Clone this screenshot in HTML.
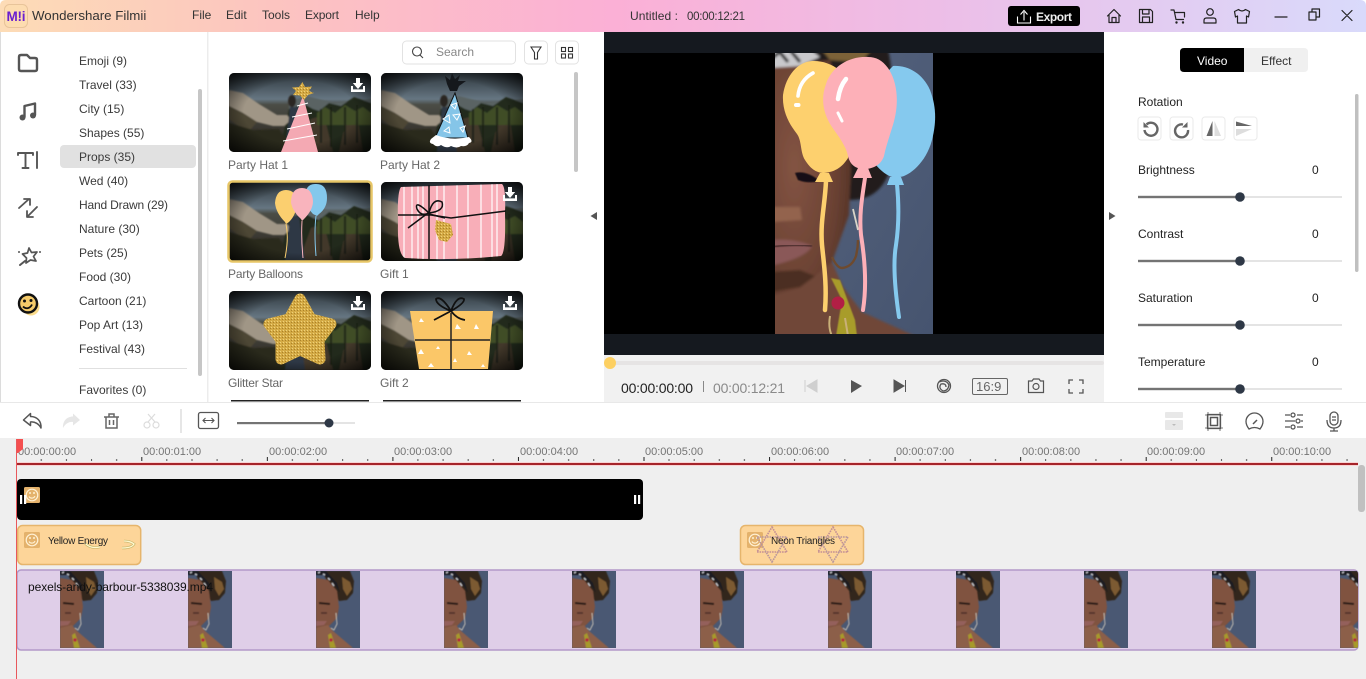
<!DOCTYPE html>
<html lang="en"><head><meta charset="utf-8"><title>Wondershare Filmii</title>
<style>
html,body{margin:0;padding:0;background:#fff;width:1366px;height:679px;overflow:hidden}
svg{display:block}
text{font-family:"Liberation Sans","Noto Sans CJK SC",sans-serif;font-size:12px;fill:#333}
.cat text{fill:#3a3a3a}
.lbl text{fill:#666}
.rul text{font-size:11px;fill:#747474}
.tb{fill:none;stroke:#222;stroke-width:1.2;stroke-linecap:round;stroke-linejoin:round}
</style></head><body>
<svg width="1366" height="679" viewBox="0 0 1366 679" xmlns="http://www.w3.org/2000/svg">
<defs>
<filter id="b1" x="-5%" y="-5%" width="110%" height="110%"><feGaussianBlur stdDeviation="1.3"/></filter>
<filter id="b2" x="-5%" y="-5%" width="110%" height="110%"><feGaussianBlur stdDeviation=".8"/></filter>
<filter id="b3" x="-5%" y="-5%" width="110%" height="110%"><feGaussianBlur stdDeviation=".45"/></filter>
<linearGradient id="title" x1="0" x2="1" y1="0" y2="0"><stop offset="0" stop-color="#fddcb6"/><stop offset=".2" stop-color="#fcc4c0"/><stop offset=".45" stop-color="#fbb0d6"/><stop offset=".7" stop-color="#ecbfe8"/><stop offset="1" stop-color="#d9dafb"/></linearGradient>
<linearGradient id="sky" x1="0" x2="0" y1="0" y2="1"><stop offset="0" stop-color="#2d363c"/><stop offset=".33" stop-color="#667682"/><stop offset=".4" stop-color="#4b4d46"/><stop offset="1" stop-color="#29221c"/></linearGradient>
<radialGradient id="vig" cx=".5" cy=".5" r=".72"><stop offset=".55" stop-color="#000" stop-opacity="0"/><stop offset="1" stop-color="#000" stop-opacity=".9"/></radialGradient>
<linearGradient id="vidbg" x1="0" x2="1" y1="0" y2="1"><stop offset="0" stop-color="#56647f"/><stop offset="1" stop-color="#46546f"/></linearGradient>
<radialGradient id="skin" cx=".3" cy=".45" r=".85"><stop offset="0" stop-color="#835443"/><stop offset=".6" stop-color="#6b4233"/><stop offset="1" stop-color="#4a2c22"/></radialGradient>
<pattern id="gold" width="3" height="3" patternUnits="userSpaceOnUse"><rect width="3" height="3" fill="#d4aa45"/><rect x="0" y="0" width="1" height="1" fill="#efd27a"/><rect x="2" y="1" width="1" height="1" fill="#ab8228"/></pattern>
<pattern id="ticks" x="15.75" y="456" width="125.55" height="6" patternUnits="userSpaceOnUse"><rect x="0" y="1" width="1" height="4" fill="#222"/><rect x="25" y="3" width="1" height="2" fill="#555"/><rect x="50.2" y="3" width="1" height="2" fill="#555"/><rect x="75.3" y="3" width="1" height="2" fill="#555"/><rect x="100.4" y="3" width="1" height="2" fill="#555"/></pattern>
<clipPath id="tclip"><rect width="142" height="79" rx="5"/></clipPath>
<clipPath id="listclip"><rect x="208" y="32" width="396" height="370"/></clipPath>
<clipPath id="vclip"><rect x="775" y="53" width="158" height="281"/></clipPath>
<clipPath id="fclip"><rect width="44" height="77"/></clipPath>
<clipPath id="trk"><rect x="17" y="570" width="1341" height="80" rx="4"/></clipPath>
<clipPath id="g1clip"><path d="M3 3 104 0Q108 3 107 29 108 69 103 72 53 77 7 74 -1 70 0 38-1 8 3 3Z"/></clipPath>

<g id="scene"><g clip-path="url(#tclip)">
<rect width="142" height="79" fill="url(#sky)"/>
<g filter="url(#b2)">
<path d="M60 28 78 23 105 30 142 26V45H60Z" fill="#5a6464"/>
<path d="M50 79 60 36 75 31 84 36 90 38 100 30 112 33 125 24 142 30V79Z" fill="#232b1b"/>
<path d="M70 79 82 46 95 42 104 79ZM110 79 118 44 128 42 134 79Z" fill="#43372a"/>
<path d="M88 40l8-6 10 6 10-8 10 6 8-4 8 6v12H88Z" fill="#3f4e25"/>
<path d="M92 36V70M102 34V74M116 34V72M128 32V70" stroke="#1b2213" stroke-width="2"/>
<path d="M0 17 14 20 30 31 48 42 58 42 62 47 55 53 44 53 28 49 14 40 0 33Z" fill="#a09686"/>
<path d="M0 33 14 40 28 49 20 58 8 52 0 46Z" fill="#4d4635"/>
<path d="M0 50 24 57 50 56 60 70 50 79H0Z" fill="#2c2b1e"/>
<ellipse cx="63" cy="28" rx="4" ry="6" fill="#2a2522"/>
<path d="M61 34 70 34 76 79H56Z" fill="#2d3744"/>
</g>
<rect width="142" height="79" fill="url(#vig)"/>
</g></g>

<g id="dl" fill="#fff"><path d="M-2-7h4v5h3.200L0 4-5.200-2H-2Z"/><path d="M-7 1h2v3.400H5V1h2v6H-7Z"/></g>

<g id="face"><g clip-path="url(#fclip)">
<rect width="44" height="77" fill="#4a5873"/>
<g filter="url(#b3)">
<path d="M6 0H34L38 10 37 22 31 29 23 30 15 18Z" fill="#33271d"/>
<path d="M26 6 34 11 36 18 31 25 27 18Z" fill="#7c5a30"/>
<path d="M0 7 12 9 21 20 23 36 21 47 13 55 0 58Z" fill="#80523f"/>
<path d="M0 57 12 54 17 60 37 77H0Z" fill="#8c5e49"/>
<path d="M0 0H10L21 12 24 22 17 11 8 4 0 4Z" fill="#1d1b20"/>
<path d="M2 2 4 1M7 3 9 4M12 7 14 9M16 12 18 15" stroke="#c9cbd0" stroke-width="1.300"/>
<path d="M3 32 14 33" stroke="#2a1c18" stroke-width="2"/>
<path d="M5 42 11 42" stroke="#4d2f27" stroke-width="1.500"/>
<path d="M0 50 11 50 8 54 0 55Z" fill="#94605c"/>
<path d="M20 42 21 53 18 59 15 57" fill="none" stroke="#c7c0b4" stroke-width=".9"/>
<path d="M15 62 20 77H14L12 64Z" fill="#a79a2a"/><circle cx="15" cy="69" r="1.700" fill="#b42040"/>
</g></g></g>

<g id="smile"><rect x="0" y="0" width="16" height="16" rx="1.500" fill="#e4b26c"/><circle cx="8" cy="8" r="5.800" fill="none" stroke="#fff1d4" stroke-width="1.200"/><path d="M5 9.500c1 2 4.500 2.400 6-.4" fill="none" stroke="#fff1d4" stroke-width="1.200"/><circle cx="6" cy="6" r="1" fill="#fff1d4"/><circle cx="10" cy="6" r="1" fill="#fff1d4"/></g>

<g id="hex" fill="none" stroke="#c38f95" stroke-width="1.600" stroke-dasharray="1.600 .9"><path d="M15 0 30 25H0Z"/><path d="M15 35 30 10H0Z" stroke="#b8969c"/></g>

<g id="slider"><rect x="0" y="-1.200" width="102" height="2.400" fill="#747474"/><rect x="102" y="-1" width="102" height="2" fill="#e4e4e4"/><circle cx="102" cy="0" r="4.800" fill="#2e3846"/></g>
<g id="sq"><rect x="0" y="0" width="23" height="23" rx="3" fill="#fff" stroke="#eaeaea"/></g>
</defs>

<!-- base -->
<rect width="1366" height="679" fill="#fff"/>
<rect x="0" y="32" width="1" height="370" fill="#dcdcdc"/>
<rect x="207" y="32" width="1.500" height="370" fill="#ececec"/>
<path d="M6 0H1360Q1366 0 1366 6V32H0V6Q0 0 6 0Z" fill="url(#title)"/>

<!-- title bar -->
<rect x="4.500" y="4.500" width="23" height="23" rx="5" fill="#fddcb0" stroke="#e8c49a"/>
<text x="6.500" y="21" style="font-size:13.500px;font-weight:bold;fill:#6a1fd0" textLength="19">M!i</text>
<text x="32" y="20" style="font-size:13.300px;fill:#333">Wondershare Filmii</text>
<text x="192" y="19">File</text><text x="226" y="19">Edit</text><text x="262" y="19">Tools</text><text x="305" y="19" textLength="34">Export</text><text x="355" y="19">Help</text>
<text x="630" y="20" textLength="48">Untitled :</text><text x="687" y="20" textLength="58" style="font-size:11.500px">00:00:12:21</text>
<rect x="1008" y="6" width="72" height="20" rx="3" fill="#000"/>
<path d="M1024 20.500V12M1020.500 14.500 1024 10.500 1027.500 14.500M1017.500 16.500V23H1030.500V16.500" fill="none" stroke="#fff" stroke-width="1.100"/>
<text x="1036" y="21" style="font-weight:bold;fill:#eee" textLength="36">Export</text>
<g class="tb">
<path d="M1107.500 16 1114 9.500 1120.500 16M1109 15V22.500H1119V15M1112 22.500V17.500H1116V22.500"/>
<path d="M1139.500 9.500H1150.500L1152.500 11.500V22.500H1139.500ZM1142.500 9.500V14H1149V9.500M1142.500 22.500V17H1149.500V22.500"/>
<path d="M1171 10H1174L1176 19.500H1183.500M1175 12.500H1184.500V17"/><circle cx="1176.500" cy="22.500" r=".6"/><circle cx="1183" cy="22.500" r=".6"/>
<circle cx="1210" cy="12" r="3.300"/><path d="M1204 23V20.500Q1204 18 1206.500 18H1213.500Q1216 18 1216 20.500V23Z"/>
<path d="M1238.500 9.500 1234.500 11.500 1235.500 17 1237.500 16V23H1246.500V16L1248.500 17 1249.500 11.500 1245.500 9.500Q1242 12.500 1238.500 9.500Z"/>
<path d="M1275 17H1287M1309 12H1316V20H1309ZM1312 12V9H1319.500V17H1316M1342 10.500 1352 20.500M1352 10.500 1342 20.500"/>
</g>

<!-- left nav icons -->
<g fill="none" stroke="#555" stroke-width="2.400" stroke-linejoin="round" stroke-linecap="round">
<path d="M19 57Q19 55 21 55H27L30 58H35Q37 58 37 60V69Q37 71 35 71H21Q19 71 19 69Z"/>
<path d="M24.500 117V106L35 103.500V115"/>
<path d="M18 155V153H33V155M25.500 153V168M22.500 168H28.500" stroke-width="1.900"/><path d="M37 152V168" stroke-width="1.900"/>
<path d="M19 208 29 199M24 199H30V205M37 207 28 216M27 211V217H33" stroke-width="1.800"/>
<path d="M29 248 31.500 252.500 37 252 33.500 256.500 36 261 30.500 260 26 263 26.500 258 22.500 254 27.500 253Z" stroke-width="1.700"/><path d="M20 265 25 261" stroke-width="2"/>
</g>
<g fill="#555"><circle cx="22.500" cy="117.500" r="3"/><circle cx="33" cy="115.500" r="3"/><circle cx="19" cy="252" r="1"/><circle cx="40" cy="252" r="1"/></g>
<circle cx="31" cy="307" r="8.500" fill="#fbdc8c"/>
<circle cx="28" cy="303.500" r="9" fill="#f5cb6a" stroke="#111" stroke-width="2.400"/>
<circle cx="24.500" cy="301" r="1.500" fill="#111"/><circle cx="31" cy="300.500" r="1.500" fill="#111"/><path d="M23 306.500c3 3 7 2 9-2" fill="none" stroke="#111" stroke-width="1.800"/>

<!-- categories -->
<rect x="60" y="145" width="136" height="23" rx="4" fill="#e1e1e1"/>
<g class="cat">
<text x="79" y="65">Emoji (9)</text><text x="79" y="89">Travel (33)</text><text x="79" y="113">City (15)</text><text x="79" y="137">Shapes (55)</text><text x="79" y="161">Props (35)</text><text x="79" y="185">Wed (40)</text><text x="79" y="209" textLength="89">Hand Drawn (29)</text><text x="79" y="233">Nature (30)</text><text x="79" y="257">Pets (25)</text><text x="79" y="281">Food (30)</text><text x="79" y="305">Cartoon (21)</text><text x="79" y="329">Pop Art (13)</text><text x="79" y="353">Festival (43)</text><text x="79" y="394">Favorites (0)</text>
</g>
<rect x="79" y="368" width="108" height="1" fill="#e0e0e0"/>
<rect x="198" y="89" width="4" height="287" rx="2" fill="#c6c6c6"/>

<!-- search row -->
<rect x="402.500" y="41" width="113" height="23" rx="4" fill="#fff" stroke="#e2e2e2"/>
<circle cx="417" cy="51.500" r="4.500" fill="none" stroke="#444" stroke-width="1.100"/><path d="M420 55 423 58" stroke="#444" stroke-width="1.100"/>
<text x="436" y="56" style="fill:#888">Search</text>
<rect x="524.500" y="41" width="23" height="23" rx="4" fill="#fff" stroke="#e2e2e2"/>
<path d="M531 47H541L537.500 52.500V59H534.500V52.500Z" fill="none" stroke="#333" stroke-width="1.100"/>
<rect x="555.500" y="41" width="23" height="23" rx="4" fill="#fff" stroke="#e2e2e2"/>
<g fill="none" stroke="#333" stroke-width="1.100"><rect x="561.500" y="47.500" width="4" height="4"/><rect x="568.500" y="47.500" width="4" height="4"/><rect x="561.500" y="54" width="4" height="4"/><rect x="568.500" y="54" width="4" height="4"/></g>
<rect x="574" y="72" width="4" height="100" rx="2" fill="#c6c6c6"/>

<!-- thumbnails -->
<g clip-path="url(#listclip)">
<g transform="translate(229 73)"><use href="#scene"/>
<path d="M74 23 52 79 89 79Z" fill="#f4a9b3"/><path d="M68 33 79 30M63 44 83 40M58 56 86 50M54 68 88 62" stroke="#fff" stroke-width="1" fill="none"/>
<path d="M73.500 9 76 14 83 13.500 80 18 85 20 79 22 75 27 71 22.500 64 22 67 18 63 14.500 70 14Z" fill="url(#gold)"/><use href="#dl" x="129" y="12"/></g>
<g transform="translate(381 73)"><use href="#scene"/>
<path d="M74 20 54 65 87 65Z" fill="#85c5e8" stroke="#111" stroke-width="1"/>
<path d="M50 66Q47 70 52 71 56 75 60 72 66 76 70 73 76 76 80 73 86 74 88 70 93 69 88 64 70 68 55 62Z" fill="#fff"/>
<path d="M64 3 69 7 71 0 74 6 79 2 77 8 85 8 78 13 76 18 69 18 66 11Z" fill="#15181c"/>
<path d="M70 32 76 30 74 36ZM62 46 68 42 69 50ZM72 42 79 41 76 47ZM63 58 68 54 69 60ZM79 55 84 53 82 59Z" fill="none" stroke="#fff" stroke-width="1"/></g>
<g transform="translate(229 182)"><use href="#scene"/>
<path d="M86 2Q98 1 98 16 98 26 90 32L88 34 84 32Q78 26 76 16 76 2 86 2Z" fill="#84c8ec"/><path d="M87 34Q85 50 87 74" stroke="#84c8ec" fill="none"/>
<path d="M57 8Q47 8 46 21 47 31 56 40L57 42 60 40Q68 32 68 20 67 8 57 8Z" fill="#fbcf6f"/><path d="M57 42Q60 56 56 76" stroke="#fbcf6f" fill="none"/>
<path d="M73 6Q62 6 62 21 64 30 72 37L73 39 75 37Q84 28 84 19 83 6 73 6Z" fill="#f9b4bd"/><path d="M73 39Q72 56 74 76" stroke="#f9b4bd" fill="none"/>
<rect x="-.500" y="-.500" width="143" height="80" rx="4" fill="none" stroke="#e7c667" stroke-width="2.500"/></g>
<g transform="translate(381 182)"><use href="#scene"/>
<g transform="translate(17 2)"><g clip-path="url(#g1clip)"><rect x="-2" y="-2" width="114" height="80" fill="#f8aeb8"/>
<path d="M6 0V76M14 0V76M20 0V76M25 0V76M39 0V76M46 0V76M59 0V76M70 0V76M83 0V76M94 0V76M99 0V76" stroke="#fff" stroke-width="1.200" fill="none"/></g></g>
<path d="M48 3V77M17 33 50 33 70 36 125 29" stroke="#111" stroke-width="1.500" fill="none"/>
<path d="M48 31Q33 17 36 27 40 35 48 31Q64 29 61 20 52 15 48 31ZM47 31 27 46M48 32 64 36" stroke="#111" stroke-width="1.500" fill="none"/>
<path d="M55 38 70 42 72 53 66 60 58 58 54 48Z" fill="url(#gold)"/><use href="#dl" x="129" y="12"/></g>
<g transform="translate(229 291)"><use href="#scene"/>
<path d="M71 8 82 28 102 33 90 49 91 68 71 59 52 68 52 49 40 33 60 28Z" fill="url(#gold)" stroke="url(#gold)" stroke-width="11" stroke-linejoin="round"/><use href="#dl" x="129" y="12"/></g>
<g transform="translate(381 291)"><use href="#scene"/>
<path d="M29 20H112L107 78H38Z" fill="#fbc768"/>
<path d="M34 49H109M70 22V78" stroke="#222" stroke-width="1.500" fill="none"/>
<path d="M70 20Q55 14 55 8 60 4 70 20Q84 12 83 8 76 4 70 20ZM70 20 53 29M70 20Q76 28 84 29" stroke="#111" stroke-width="1.800" fill="none"/>
<path d="M40 27l3 4h-5ZM76 33l4 5h-6ZM95 33l3 5h-5ZM40 58l3 5h-6ZM57 55l2 3h-4ZM88 60l3 4h-5ZM50 72l3 4h-6ZM74 67l2 4h-4ZM102 73l2 3h-4Z" fill="#fff"/><use href="#dl" x="129" y="12"/></g>
<rect x="231" y="400" width="138" height="1.500" fill="#222"/><rect x="383" y="400" width="138" height="1.500" fill="#222"/>
</g>
<g class="lbl">
<text x="228" y="169">Party Hat 1</text><text x="380" y="169">Party Hat 2</text><text x="228" y="278" textLength="75">Party Balloons</text><text x="380" y="278">Gift 1</text><text x="228" y="387" textLength="55">Glitter Star</text><text x="380" y="387">Gift 2</text>
</g>

<!-- preview -->
<rect x="604" y="32" width="500" height="323" fill="#000"/>
<rect x="604" y="32" width="500" height="21" fill="#15191f"/><rect x="604" y="334" width="500" height="21" fill="#15191f"/>
<path d="M597 212V220L590.500 216Z" fill="#555"/><path d="M1109 212V220L1115.500 216Z" fill="#555"/>
<g clip-path="url(#vclip)">
<rect x="775" y="53" width="158" height="281" fill="url(#vidbg)"/>
<g filter="url(#b1)">
<path d="M770 48H888Q898 100 890 170 880 200 850 200L770 200Z" fill="#241e1b"/>
<path d="M822 50H872L860 62 830 60Z" fill="#7b6238"/>
<path d="M770 66 830 60 848 130 851 170 849 215 832 262 800 290 770 296Z" fill="url(#skin)"/>
<path d="M770 296 800 288 832 262 843 287 862 312 915 336H770Z" fill="#6f4637"/>
<path d="M770 48H808L820 57 800 66 770 68Z" fill="#c9c9cc"/>
<path d="M778 50 788 62M790 50 800 62M770 60 782 50" stroke="#111" stroke-width="3"/>
<path d="M770 207 800 207 802 220 770 222Z" fill="#93634d"/>
<path d="M770 240Q795 238 812 246 806 258 770 266Z" fill="#8a5858"/>
<path d="M770 292 800 287 815 276 800 270 770 272Z" fill="#4c2d23"/>
</g>
<path d="M795 173Q806 170 820 181 808 184 798 180Z" fill="#171012" filter="url(#b3)"/>
<path d="M770 247Q795 244 812 246" fill="none" stroke="#3d2322" stroke-width="1.300" filter="url(#b3)"/>
<path d="M832 257Q837 268 842 268 852 267 856 256 858 248 858 240" fill="none" stroke="#6e4a2e" stroke-width="2.400"/><path d="M853 209 858 230" stroke="#d8d4c8" stroke-width="1.800"/>
<path d="M831 278 840 280 855 320 857 336H836L842 300Z" fill="#a89c2c" filter="url(#b3)"/><circle cx="838" cy="303" r="6.500" fill="#b21f45"/><path d="M830 316Q828 328 832 336M845 318 848 336" stroke="#c9b078" stroke-width="2" fill="none"/>
</g>
<!-- balloons -->
<path d="M893 66C906 65 922 72 930 90 937 108 936 124 932 140 926 163 909 176 900 177L892 177C886 175 880 170 876 165L860 100Z" fill="#85c9ee"/>
<path d="M890 177H901L904 185H887Z" fill="#85c9ee"/><path d="M897 184C899 205 899 225 896 245 893 262 895 290 899 317" fill="none" stroke="#85c9ee" stroke-width="4" stroke-linecap="round"/>
<path d="M812 61C798 62 786 75 783 95 782 112 790 125 797 134 802 141 800 152 805 160 811 170 818 173 824 173 836 172 843 166 848 158L860 100C850 72 830 60 812 61Z" fill="#fdd06e"/>
<path d="M820 173H829L833 182H815Z" fill="#fdd06e"/><path d="M826 181C825 205 820 222 822 245 824 265 827 285 825 310" fill="none" stroke="#fdd06e" stroke-width="4.500" stroke-linecap="round"/>
<path d="M868 57C850 56 832 66 826 84 820 100 824 115 832 127 839 137 846 146 848 156 850 165 856 169 864 169 873 169 881 165 884 156 886 146 889 138 892 128 899 108 899 84 888 68 882 60 876 57 868 57Z" fill="#fdb0b8"/>
<path d="M858 168H868L872 178H853Z" fill="#fdb0b8"/><path d="M865 178C862 198 859 215 861 235 865 260 867 285 863 310" fill="none" stroke="#fdb0b8" stroke-width="4" stroke-linecap="round"/>
<g fill="none" stroke="#fff" stroke-linecap="round"><path d="M846 79C841 85 839 92 838 99" stroke-width="4.500"/><path d="M838 113 842 121" stroke-width="3"/><path d="M813 73C804 78 799 86 798 96" stroke-width="3.600"/><path d="M796 105H798.500" stroke-width="4"/></g>

<!-- seek & controls -->
<rect x="604" y="355" width="500" height="47" fill="#f1f1f1"/>
<rect x="604" y="361" width="500" height="4" rx="2" fill="#e6e4e4"/>
<circle cx="610" cy="363" r="6" fill="#fdd062"/>
<text x="621" y="393" style="font-size:14px;fill:#222" textLength="72">00:00:00:00</text>
<rect x="703" y="381" width="1" height="11" fill="#888"/>
<text x="713" y="393" style="font-size:14px;fill:#8a8a8a" textLength="72">00:00:12:21</text>
<path d="M817 380V392L807 386ZM805 380V392" fill="#cfcfcf" stroke="#cfcfcf"/>
<path d="M851 380 862 386 851 393Z" fill="#555"/>
<path d="M894 380 904 386 894 392ZM905.500 380V392" fill="#555" stroke="#555"/>
<g fill="none" stroke="#555" stroke-width="1.300"><circle cx="944" cy="386" r="6.500"/><path d="M939 382Q946 379 949 385 948 391 943 391 938 388 941 384 946 383 946 387"/></g>
<rect x="972.500" y="378.500" width="35" height="16" rx="1.500" fill="none" stroke="#666"/>
<text x="976" y="391" style="font-size:13px;fill:#666">16:9</text>
<g fill="none" stroke="#555" stroke-width="1.200"><path d="M1028.500 381H1032L1033.500 379H1039L1040.500 381H1043.500V392.500H1028.500Z"/><circle cx="1036" cy="386.500" r="3"/>
<path d="M1069 384V380H1073M1079 380H1083V384M1083 389V393H1079M1073 393H1069V389" stroke-width="1.300"/></g>

<!-- right panel -->
<path d="M1184 48H1244V72H1184Q1180 72 1180 68V52Q1180 48 1184 48Z" fill="#000"/>
<path d="M1244 48H1304Q1308 48 1308 52V68Q1308 72 1304 72H1244Z" fill="#f0f0f0"/>
<text x="1197" y="65" style="fill:#fff">Video</text><text x="1261" y="65" style="fill:#333">Effect</text>
<text x="1138" y="106" style="fill:#222">Rotation</text>
<use href="#sq" x="1138" y="117"/><use href="#sq" x="1170" y="117"/><use href="#sq" x="1202" y="117"/><use href="#sq" x="1234" y="117"/>
<g fill="none" stroke="#666" stroke-width="2.400"><path d="M1146.500 124.500A6.500 6.500 0 1 1 1144.500 130"/><path d="M1183 124.500A6.500 6.500 0 1 0 1188 130"/></g>
<path d="M1143.500 122V127.500H1149ZM1187.500 122V127.500H1182Z" fill="#666"/>
<path d="M1212.500 121V136H1206.500ZM1236 121.500 1252 126H1236Z" fill="#666"/>
<path d="M1214.500 121V136H1221ZM1236 129H1252L1236 136Z" fill="#ddd"/>
<text x="1138" y="174" style="fill:#222">Brightness</text><text x="1138" y="238" style="fill:#222">Contrast</text><text x="1138" y="302" style="fill:#222">Saturation</text><text x="1138" y="366" style="fill:#222">Temperature</text>
<text x="1312" y="174" style="fill:#222">0</text><text x="1312" y="238" style="fill:#222">0</text><text x="1312" y="302" style="fill:#222">0</text><text x="1312" y="366" style="fill:#222">0</text>
<use href="#slider" x="1138" y="197"/><use href="#slider" x="1138" y="261"/><use href="#slider" x="1138" y="325"/><use href="#slider" x="1138" y="389"/>
<rect x="1355" y="94" width="3.500" height="178" rx="1.700" fill="#c0c0c0"/>

<!-- toolbar -->
<rect x="0" y="402" width="1366" height="1.500" fill="#e8e8e8"/>
<rect x="0" y="403" width="1366" height="35" fill="#fff"/>
<path d="M30.500 413.500 23.500 420 30.500 425.500V422C35 421.500 39 424 41 428 41.500 421 37 416.500 30.500 416.500Z" fill="none" stroke="#555" stroke-width="1.500" stroke-linejoin="round"/>
<path d="M73 413.500 80 420 73 425.500V422C69 421.500 65 424 63 428 62.500 421 67 416.500 73 416.500Z" fill="#e6e6e6"/>
<g fill="none" stroke="#666" stroke-width="1.500"><path d="M104 417H119M109 417V414H114V417M106 417V428H117V417M109.500 420V425M113.500 420V425"/></g>
<g fill="none" stroke="#dcdcdc" stroke-width="1.200"><circle cx="147" cy="425" r="3"/><circle cx="156" cy="425" r="3"/><path d="M148 422 155 414M155 422 148 414"/></g>
<rect x="180.500" y="409" width="1" height="24" fill="#ccc"/>
<rect x="198.500" y="412.500" width="20" height="16" rx="2" fill="none" stroke="#555" stroke-width="1.300"/>
<path d="M203 420.500H214M205.500 418 203 420.500 205.500 423M211.500 418 214 420.500 211.500 423" fill="none" stroke="#555" stroke-width="1.100"/>
<rect x="237" y="422" width="92" height="2.200" fill="#747474"/><rect x="329" y="422" width="26" height="2" fill="#e4e4e4"/><circle cx="329" cy="423" r="4.500" fill="#2e3846"/>
<g fill="#e8e8e8"><rect x="1165" y="412" width="18" height="6" rx="1"/><rect x="1165" y="420" width="18" height="10" rx="1"/></g><path d="M1172 424H1176L1174 426Z" fill="#bbb"/>
<g fill="none" stroke="#555" stroke-width="1.300"><rect x="1207.500" y="414.500" width="13" height="14"/><rect x="1210.500" y="417.500" width="7" height="8" stroke-width="1.500"/><path d="M1205 415H1223M1205 428H1223M1208 412V431M1220 412V431" stroke-width=".8"/>
<path d="M1249 429Q1246 425 1246 421.500A8.500 8.500 0 0 1 1263 421.500Q1263 425 1260 429 1254.500 426 1249 429Z"/><path d="M1253 424 1257 420" stroke-width="1.500"/>
<path d="M1285 415H1290M1297 415H1303M1285 421H1295M1301 421H1303M1285 427H1290M1297 427H1303"/><circle cx="1293" cy="415" r="2"/><circle cx="1298" cy="421" r="2"/><circle cx="1293" cy="427" r="2"/>
<rect x="1330" y="412" width="8" height="13" rx="4"/><path d="M1327 420Q1327 428 1334 428 1341 428 1341 420M1334 428V431M1330 431H1338M1332 417H1336M1332 420H1336"/></g>

<!-- timeline -->
<rect x="0" y="438" width="1366" height="241" fill="#efefef"/>
<g class="rul">
<text x="18" y="455">00:00:00:00</text><text x="143" y="455">00:00:01:00</text><text x="269" y="455">00:00:02:00</text><text x="394" y="455">00:00:03:00</text><text x="520" y="455">00:00:04:00</text><text x="645" y="455">00:00:05:00</text><text x="771" y="455">00:00:06:00</text><text x="896" y="455">00:00:07:00</text><text x="1022" y="455">00:00:08:00</text><text x="1147" y="455">00:00:09:00</text><text x="1273" y="455">00:00:10:00</text>
</g>
<rect x="16" y="456" width="1342" height="6" fill="url(#ticks)"/>
<rect x="17" y="462" width="1341" height="4" fill="#f9d3d3"/>
<rect x="17" y="463" width="1341" height="2" fill="#a5242a"/>
<rect x="1358" y="465" width="7" height="47" rx="3" fill="#c0c0c0"/>

<rect x="17" y="479" width="626" height="41" rx="4" fill="#000"/>
<use href="#smile" x="24" y="487"/><rect x="20" y="495" width="2.200" height="9" fill="#fff"/><rect x="24" y="495" width="2.200" height="9" fill="#fff"/>
<rect x="634" y="495" width="2.200" height="9" fill="#fff"/><rect x="638" y="495" width="2.200" height="9" fill="#fff"/>

<rect x="17.700" y="525.500" width="123" height="39" rx="5" fill="#fdd599" stroke="#e6b56c" stroke-width="1.500"/>
<use href="#smile" x="24" y="532"/>
<path d="M85 543Q90 549 100 547M122 548Q132 548 134 544 130 541 124 541" fill="none" stroke="#a3a04a" stroke-width="2.600" opacity=".6"/>
<path d="M85 543Q90 549 100 547M122 548Q132 548 134 544 130 541 124 541" fill="none" stroke="#fff8cf" stroke-width="1.300"/>
<text x="48" y="544" style="font-size:10px;fill:#222" textLength="60">Yellow Energy</text>
<rect x="740.500" y="525.500" width="123" height="39" rx="5" fill="#fdd599" stroke="#e6b56c" stroke-width="1.500"/>
<use href="#smile" x="747" y="532"/>
<use href="#hex" x="757" y="527"/><use href="#hex" x="818" y="527"/>
<text x="771" y="544" style="font-size:10px;fill:#222" textLength="64">Neon Triangles</text>

<rect x="17" y="570" width="1341" height="80" rx="4" fill="#dfcee8" stroke="#b399c9" stroke-width="1.500"/>
<g clip-path="url(#trk)">
<use href="#face" x="60" y="571"/><use href="#face" x="188" y="571"/><use href="#face" x="316" y="571"/><use href="#face" x="444" y="571"/><use href="#face" x="572" y="571"/><use href="#face" x="700" y="571"/><use href="#face" x="828" y="571"/><use href="#face" x="956" y="571"/><use href="#face" x="1084" y="571"/><use href="#face" x="1212" y="571"/><use href="#face" x="1340" y="571"/>
</g>
<text x="28" y="591" style="fill:#111" textLength="185">pexels-andy-barbour-5338039.mp4</text>

<path d="M16 439H23V449L18 453H16Z" fill="#f44f4f"/>
<rect x="16" y="439" width="1" height="240" fill="#e8585c"/>
</svg>
</body></html>
